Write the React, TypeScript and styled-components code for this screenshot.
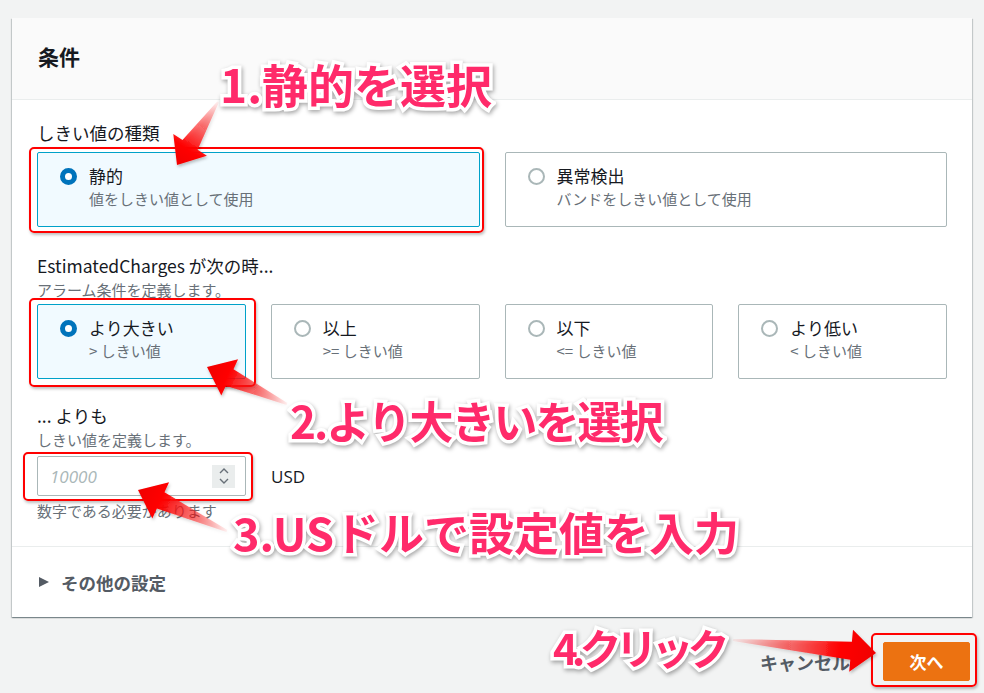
import React from 'react';
import styled, { createGlobalStyle } from 'styled-components';

const GlobalStyle = createGlobalStyle`
  html, body {
    margin: 0;
    padding: 0;
    background: #f2f3f3;
  }
  body {
    font-family: "Noto Sans CJK JP", "Noto Sans", sans-serif;
    color: #16191f;
  }
  * { box-sizing: border-box; }
`;

const Page = styled.div`
  position: relative;
  width: 984px;
  height: 693px;
  padding: 18px 12px 0;
  overflow: hidden;
  background: #f2f3f3;
`;

const Panel = styled.section`
  background: #fff;
  box-shadow: 0 1px 1px 0 rgba(0, 28, 36, 0.3), 1px 1px 1px 0 rgba(0, 28, 36, 0.15),
    -1px 1px 1px 0 rgba(0, 28, 36, 0.15);
`;

const PanelHeader = styled.header`
  height: 82px;
  display: flex;
  align-items: center;
  padding: 0 26px 6px;
  background: #fafafa;
  border-bottom: 1px solid #eaeded;
`;

const PanelTitle = styled.h2`
  margin: 0;
  font-size: 21px;
  font-weight: 700;
  color: #16191f;
`;

const PanelBody = styled.div`
  padding: 21px 25px 25px;
  border-bottom: 1px solid #eaeded;
`;

const Field = styled.div<{ $gap?: number }>`
  margin-top: ${({ $gap }) => $gap ?? 0}px;
`;

const FieldLabel = styled.div`
  font-size: 17.5px;
  line-height: 24px;
  color: #16191f;
`;

const FieldHint = styled.div`
  font-size: 15px;
  line-height: 20px;
  margin-top: 2px;
  color: #687078;
`;

const TileGrid = styled.div<{ $cols: number; $top: number }>`
  display: grid;
  grid-template-columns: repeat(${({ $cols }) => $cols}, 1fr);
  gap: 25px;
  margin-top: ${({ $top }) => $top}px;
`;

const Tile = styled.div<{ $selected?: boolean }>`
  display: flex;
  align-items: flex-start;
  gap: 12px;
  padding: 12px 20px 15px 22px;
  border: 1px solid ${({ $selected }) => ($selected ? '#00a1c9' : '#aab7b8')};
  background: ${({ $selected }) => ($selected ? '#f1faff' : '#fff')};
  border-radius: 2px;
`;

const Radio = styled.span<{ $checked?: boolean }>`
  flex: none;
  width: 17px;
  height: 17px;
  margin-top: 3px;
  border-radius: 50%;
  border: ${({ $checked }) => ($checked ? '5px solid #0073bb' : '2px solid #aab7b8')};
  background: #fff;
`;

const TileText = styled.div`
  display: flex;
  flex-direction: column;
`;

const TileTitle = styled.span`
  font-size: 17px;
  line-height: 22px;
  color: #16191f;
`;

const TileDesc = styled.span`
  font-size: 15px;
  line-height: 24px;
  color: #687078;
`;

const InputRow = styled.div`
  display: flex;
  align-items: center;
  gap: 25px;
  margin-top: 6px;
`;

const NumberBox = styled.div`
  width: 209px;
  height: 40px;
  display: flex;
  align-items: center;
  justify-content: space-between;
  padding: 0 10px 0 12px;
  border: 1px solid #aab7b8;
  border-radius: 2px;
  background: #fff;
`;

const Placeholder = styled.span`
  font-family: "Open Sans", "Noto Sans", sans-serif;
  font-style: italic;
  font-size: 17px;
  color: #aab7b8;
`;

const Spinner = styled.span`
  width: 23px;
  height: 23px;
  background: #eaeded;
  display: flex;
  align-items: center;
  justify-content: center;
`;

const Unit = styled.span`
  font-family: "Open Sans", "Noto Sans", sans-serif;
  font-size: 17px;
  color: #16191f;
`;

const Constraint = styled.div`
  margin-top: 5px;
  font-size: 15px;
  line-height: 20px;
  color: #687078;
`;

const ExpandRow = styled.div`
  display: flex;
  align-items: center;
  gap: 12px;
  height: 70px;
  padding: 0 27px;
  font-size: 17.5px;
  font-weight: 700;
  color: #545b64;
`;

const Caret = styled.span`
  width: 0;
  height: 0;
  border-top: 5.5px solid transparent;
  border-bottom: 5.5px solid transparent;
  border-left: 10px solid #545b64;
`;

const Footer = styled.div`
  display: flex;
  justify-content: flex-end;
  align-items: center;
  gap: 33px;
  margin-top: 25px;
  padding-right: 2px;
`;

const CancelButton = styled.button`
  border: none;
  background: none;
  padding: 0;
  font-family: inherit;
  font-size: 18px;
  font-weight: 700;
  color: #545b64;
`;

const PrimaryButton = styled.button`
  width: 87px;
  height: 39px;
  border: 1px solid #ec7211;
  border-radius: 2px;
  background: #ec7211;
  color: #fff;
  font-family: inherit;
  font-size: 17px;
  font-weight: 700;
`;

/* annotation layer */

const Overlay = styled.div`
  position: absolute;
  inset: 0;
  pointer-events: none;
`;

const Highlight = styled.div<{ $x: number; $y: number; $w: number; $h: number }>`
  position: absolute;
  left: ${({ $x }) => $x}px;
  top: ${({ $y }) => $y}px;
  width: ${({ $w }) => $w}px;
  height: ${({ $h }) => $h}px;
  border: 2px solid #f00;
  border-radius: 5px;
  box-shadow: 1px 2px 3px rgba(0, 0, 0, 0.25);
`;

const Callout = styled.div<{ $x: number; $y: number; $size: number; $spacing?: number }>`
  position: absolute;
  left: ${({ $x }) => $x}px;
  top: ${({ $y }) => $y}px;
  font-family: "Noto Sans CJK JP", sans-serif;
  font-weight: 700;
  font-size: ${({ $size }) => $size}px;
  letter-spacing: ${({ $spacing }) => $spacing ?? 0}px;
  line-height: 1;
  white-space: nowrap;
  color: #ff2a6a;
  -webkit-text-stroke: 7px #fff;
  paint-order: stroke fill;
  filter: drop-shadow(1px 2px 2px rgba(0, 0, 0, 0.35));
`;

const ArrowLayer = styled.svg`
  position: absolute;
  inset: 0;
  width: 984px;
  height: 693px;
`;

type Pt = [number, number];

const arrowPoints = (tail: Pt, tip: Pt, headLen: number, headW: number, shaftW: number) => {
  const dx = tip[0] - tail[0];
  const dy = tip[1] - tail[1];
  const len = Math.hypot(dx, dy);
  const ux = dx / len;
  const uy = dy / len;
  const nx = -uy;
  const ny = ux;
  const bx = tip[0] - ux * headLen;
  const by = tip[1] - uy * headLen;
  const p = (x: number, y: number) => `${x.toFixed(1)},${y.toFixed(1)}`;
  return [
    p(tail[0] + nx * 1, tail[1] + ny * 1),
    p(bx + (nx * shaftW) / 2, by + (ny * shaftW) / 2),
    p(bx + (nx * headW) / 2, by + (ny * headW) / 2),
    p(tip[0], tip[1]),
    p(bx - (nx * headW) / 2, by - (ny * headW) / 2),
    p(bx - (nx * shaftW) / 2, by - (ny * shaftW) / 2),
    p(tail[0] - nx * 1, tail[1] - ny * 1),
  ].join(' ');
};

const arrows: { id: string; tail: Pt; tip: Pt; headLen: number; headW: number; shaftW: number }[] = [
  { id: 'a1', tail: [218, 102], tip: [177, 165], headLen: 24, headW: 40, shaftW: 18 },
  { id: 'a2', tail: [287, 404], tip: [207, 367], headLen: 25, headW: 40, shaftW: 18 },
  { id: 'a3', tail: [227, 531], tip: [138, 490], headLen: 25, headW: 40, shaftW: 18 },
  { id: 'a4', tail: [733, 640], tip: [876, 653], headLen: 25, headW: 42, shaftW: 18 },
];

const Chevrons = () => (
  <svg width="12" height="18" viewBox="0 0 12 18" fill="none" stroke="#687078" strokeWidth="1.4">
    <path d="M2 6 L6 2 L10 6" />
    <path d="M2 12 L6 16 L10 12" />
  </svg>
);

export default function App() {
  return (
    <>
      <GlobalStyle />
      <Page>
        <Panel>
          <PanelHeader>
            <PanelTitle>条件</PanelTitle>
          </PanelHeader>
          <PanelBody>
            <Field>
              <FieldLabel>しきい値の種類</FieldLabel>
              <TileGrid $cols={2} $top={7}>
                <Tile $selected>
                  <Radio $checked />
                  <TileText>
                    <TileTitle>静的</TileTitle>
                    <TileDesc>値をしきい値として使用</TileDesc>
                  </TileText>
                </Tile>
                <Tile>
                  <Radio />
                  <TileText>
                    <TileTitle>異常検出</TileTitle>
                    <TileDesc>バンドをしきい値として使用</TileDesc>
                  </TileText>
                </Tile>
              </TileGrid>
            </Field>

            <Field $gap={27}>
              <FieldLabel>EstimatedCharges が次の時...</FieldLabel>
              <FieldHint>アラーム条件を定義します。</FieldHint>
              <TileGrid $cols={4} $top={4}>
                <Tile $selected>
                  <Radio $checked />
                  <TileText>
                    <TileTitle>より大きい</TileTitle>
                    <TileDesc>&gt; しきい値</TileDesc>
                  </TileText>
                </Tile>
                <Tile>
                  <Radio />
                  <TileText>
                    <TileTitle>以上</TileTitle>
                    <TileDesc>&gt;= しきい値</TileDesc>
                  </TileText>
                </Tile>
                <Tile>
                  <Radio />
                  <TileText>
                    <TileTitle>以下</TileTitle>
                    <TileDesc>&lt;= しきい値</TileDesc>
                  </TileText>
                </Tile>
                <Tile>
                  <Radio />
                  <TileText>
                    <TileTitle>より低い</TileTitle>
                    <TileDesc>&lt; しきい値</TileDesc>
                  </TileText>
                </Tile>
              </TileGrid>
            </Field>

            <Field $gap={25}>
              <FieldLabel>... よりも</FieldLabel>
              <FieldHint>しきい値を定義します。</FieldHint>
              <InputRow>
                <NumberBox>
                  <Placeholder>10000</Placeholder>
                  <Spinner>
                    <Chevrons />
                  </Spinner>
                </NumberBox>
                <Unit>USD</Unit>
              </InputRow>
              <Constraint>数字である必要があります</Constraint>
            </Field>
          </PanelBody>
          <ExpandRow>
            <Caret />
            その他の設定
          </ExpandRow>
        </Panel>

        <Footer>
          <CancelButton>キャンセル</CancelButton>
          <PrimaryButton>次へ</PrimaryButton>
        </Footer>

        <Overlay>
          <Highlight $x={29} $y={147} $w={455} $h={86} />
          <Highlight $x={29} $y={298} $w={227} $h={89} />
          <Highlight $x={23} $y={452} $w={230} $h={49} />
          <Highlight $x={871} $y={633} $w={106} $h={54} />

          <ArrowLayer viewBox="0 0 984 693">
            <defs>
              {arrows.map((a) => (
                <linearGradient
                  key={a.id}
                  id={a.id}
                  gradientUnits="userSpaceOnUse"
                  x1={a.tail[0]}
                  y1={a.tail[1]}
                  x2={a.tip[0]}
                  y2={a.tip[1]}
                >
                  <stop offset="0" stopColor="#ff0000" stopOpacity="0.05" />
                  <stop offset="0.55" stopColor="#ff1010" stopOpacity="0.75" />
                  <stop offset="0.75" stopColor="#ff0000" stopOpacity="1" />
                  <stop offset="1" stopColor="#f00000" stopOpacity="1" />
                </linearGradient>
              ))}
              <filter id="arrowShadow" x="-20%" y="-20%" width="140%" height="140%">
                <feDropShadow dx="1" dy="2" stdDeviation="1.5" floodColor="#000" floodOpacity="0.25" />
              </filter>
            </defs>
            {arrows.map((a) => (
              <polygon
                key={a.id}
                points={arrowPoints(a.tail, a.tip, a.headLen, a.headW, a.shaftW)}
                fill={`url(#${a.id})`}
                filter="url(#arrowShadow)"
              />
            ))}
          </ArrowLayer>

          <Callout $x={220} $y={60} $size={46}>1.静的を選択</Callout>
          <Callout $x={290} $y={398} $size={44} $spacing={-2}>2.より大きいを選択</Callout>
          <Callout $x={233} $y={509} $size={45}>3.USドルで設定値を入力</Callout>
          <Callout $x={553} $y={626} $size={42} $spacing={-6}>4.クリック</Callout>
        </Overlay>
      </Page>
    </>
  );
}
